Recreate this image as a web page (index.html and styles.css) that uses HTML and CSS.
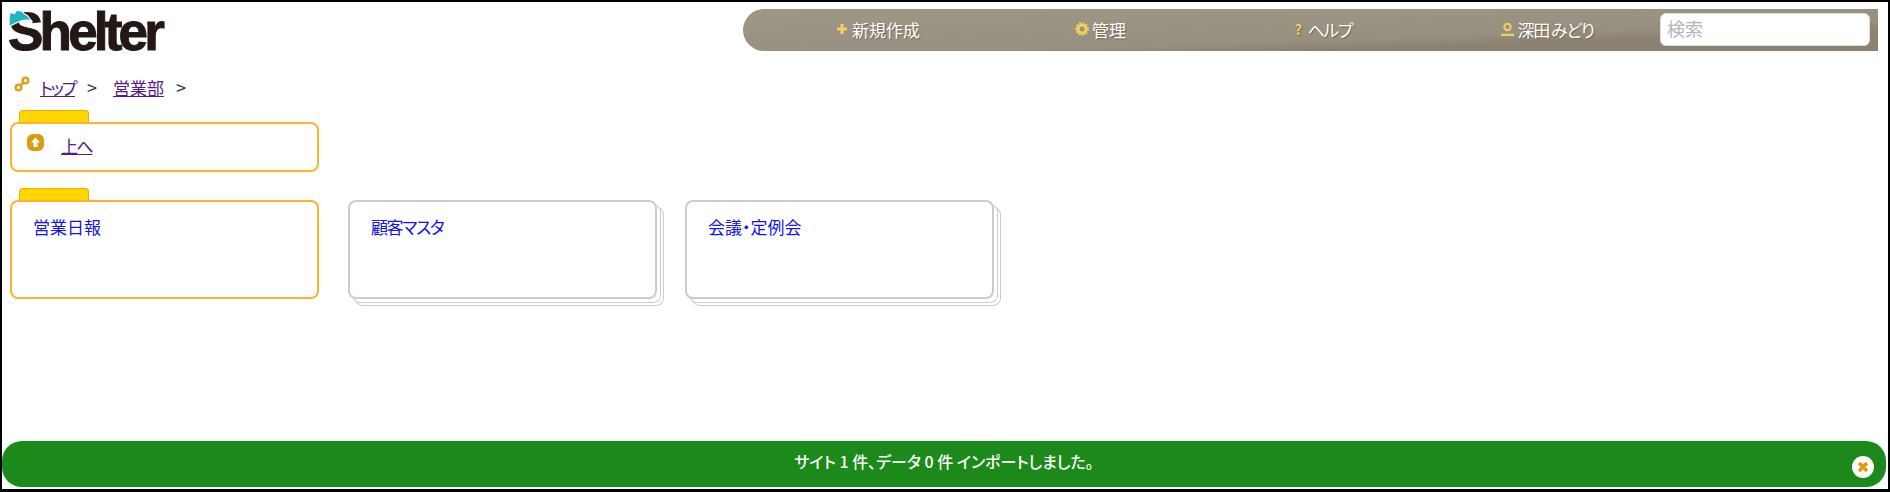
FILE: index.html
```html
<!DOCTYPE html>
<html lang="ja">
  <head>
    <meta charset="UTF-8" />
    <title>Shelter</title>
    <link rel="stylesheet" href="styles.css">
  </head>
  <body>
    <div class="frame">
      <header class="top">
        <a class="logo">
          <span>Shelter</span>
          <svg class="helmet" width="26" height="20" viewBox="0 0 24 18">
            <path d="M1 16 L1 8 L2 3 L6 4 L8 1 L12 1.5 L15 4 L18 6 L22 11 C17 9 13 10 9 12 C6 13.5 3 15 1 16 Z" fill="#1fb3c4" stroke="#fff" stroke-width="1" />
          </svg>
        </a>
        <nav class="menu">
          <a class="menu-item">
            <svg width="14" height="14" viewBox="0 0 14 14"><path d="M7 2v10M2 7h10" stroke="#f2d060" stroke-width="3" /></svg>
            新規作成
          </a>
          <a class="menu-item">
            <svg width="14" height="14" viewBox="0 0 14 14"><circle cx="7" cy="7" r="4" fill="none" stroke="#f2d060" stroke-width="3" /><circle cx="7" cy="7" r="6" fill="none" stroke="#f2d060" stroke-width="1.5" stroke-dasharray="2 1.5" /></svg>
            管理
          </a>
          <a class="menu-item tight">
            <span class="help-mark">?</span>
            ヘルプ
          </a>
          <a class="menu-item tight">
            <svg width="15" height="14" viewBox="0 0 15 14"><circle cx="7.5" cy="5" r="3.2" fill="none" stroke="#f2d060" stroke-width="2" /><path d="M1 13h13" stroke="#f2d060" stroke-width="2.5" /></svg>
            深田 みどり
          </a>
          <input class="search" type="text" placeholder="検索" />
        </nav>
      </header>

      <div class="crumbs">
        <svg class="crumb-icon" width="16" height="16" viewBox="0 0 16 16">
          <g fill="none" stroke="#d9a520" stroke-width="2.5">
            <circle cx="11.5" cy="4.5" r="2.8" />
            <circle cx="4.5" cy="11.5" r="2.8" />
            <path d="M6 10 L10 6" />
          </g>
        </svg>
        <a href="#" class="tight">トップ</a>
        <span class="sep">&gt;</span>
        <a href="#">営業部</a>
        <span class="sep">&gt;</span>
      </div>

      <div class="row up-row">
        <div class="card folder up-card">
          <svg width="17" height="17" viewBox="0 0 17 17"><rect width="17" height="17" rx="6" fill="#d89e10" /><path d="M8.5 3.5 L13 8.5 H10.5 V13 H6.5 V8.5 H4 Z" fill="#fff" /></svg>
          <a href="#">上へ</a>
        </div>
      </div>

      <div class="row">
        <div class="card folder big"><a class="title">営業日報</a></div>
        <div class="stack"><div class="card plain big"><a class="title tight">顧客マスタ</a></div></div>
        <div class="stack"><div class="card plain big"><a class="title">会議・定例会</a></div></div>
      </div>

      <div class="notice">
        <span>サイト 1 件、データ 0 件 インポートしました。</span>
        <span class="notice-close">
          <svg width="12" height="12" viewBox="0 0 12 12"><path d="M2 2 L10 10 M10 2 L2 10" stroke="#e09a10" stroke-width="3.5" /></svg>
        </span>
      </div>
    </div>
  </body>
</html>
```

FILE: styles.css
```css
html,
body {
  margin: 0;
  height: 492px;
  overflow: hidden;
}

body {
  font-family: "Noto Sans CJK JP", "Noto Sans", sans-serif;
  font-size: 17px;
  font-feature-settings: "palt";
  color: #333;
  background-color: #fff;
}

/* kana runs come out wider than in the original font */
.tight {
  letter-spacing: -1.4px;
}

.frame {
  box-sizing: border-box;
  width: 1890px;
  height: 492px;
  border: 2px solid #000;
  border-bottom-width: 3px;
  padding: 0 10px 0 6px;
  position: relative;
}

/* header */

.top {
  display: flex;
  justify-content: space-between;
  padding-top: 7px;
  height: 49px;
}

.logo {
  position: relative;
  font-family: "Liberation Sans", sans-serif;
  font-weight: bold;
  font-size: 53px;
  line-height: 46px;
  letter-spacing: -3.8px;
  color: #231815;
  -webkit-text-stroke: 1px #231815;
}

.helmet {
  position: absolute;
  left: 0;
  top: 0;
}

.menu {
  width: 1135px;
  height: 42px;
  box-sizing: border-box;
  padding-left: 23px;
  padding-bottom: 2px;
  display: grid;
  grid-template-columns: repeat(4, 223px) 1fr;
  align-items: center;
  border-radius: 21px 0 0 21px;
  background: linear-gradient(178deg, #9f9786 0%, #979080 62%, #8a8170 76%, #8a8170 100%);
}

.menu-item {
  display: flex;
  justify-content: center;
  align-items: center;
  gap: 3px;
  color: #fff;
  font-size: 17px;
  text-shadow: 1px 1px 1px #6d6554;
}

.help-mark {
  color: #f2d060;
  font-weight: bold;
  font-size: 14px;
  margin-right: 4px;
}

.search {
  box-sizing: border-box;
  justify-self: end;
  width: 210px;
  height: 33px;
  margin-right: 8px;
  border: 1px solid #ddd;
  border-radius: 6px;
  padding: 0 6px 2px;
  font-family: inherit;
  font-size: 18px;
}

.search::placeholder {
  color: #b5b5b5;
}

/* breadcrumb */

.crumbs {
  display: flex;
  align-items: center;
  height: 34px;
  margin-top: 12px;
  gap: 12px;
  padding-left: 6px;
}

.crumbs a {
  color: #551a8b;
}

.crumbs a.tight {
  letter-spacing: -2.4px;
  margin-left: -2px;
}

.crumbs .sep {
  margin-right: 4px;
  font-size: 18px;
}

.crumb-icon {
  margin-bottom: 6px;
}

/* cards */

.row {
  display: flex;
  gap: 29px;
  margin-bottom: 28px;
}

.up-row {
  margin-top: 18px;
  padding-left: 2px;
}

.row + .row {
  padding-left: 2px;
}

.card {
  box-sizing: border-box;
  width: 309px;
  background-color: #fff;
  border-radius: 8px;
  position: relative;
}

.folder {
  border: 2px solid #ffb22e;
}

/* yellow tab on top of the folder card */
.folder::before {
  content: "";
  position: absolute;
  left: 7px;
  top: -14px;
  width: 70px;
  height: 12px;
  box-sizing: border-box;
  background-color: #ffd700;
  border: 1px solid #ffa500;
  border-bottom: none;
  border-radius: 4px 4px 0 0;
}

.up-card {
  height: 50px;
  display: flex;
  align-items: flex-start;
  gap: 17px;
  padding: 10px 15px;
}

.up-card a {
  color: #551a8b;
  margin-top: 2px;
  line-height: 20px;
  letter-spacing: -1.5px;
}

.big {
  height: 99px;
  padding: 12px 21px;
}

.title {
  color: #1414ee;
  line-height: 24px;
}

.plain {
  border: 2px solid #ccc;
}

.stack {
  width: 316px;
  height: 106px;
  margin-right: -8px;
}

.stack .card {
  box-shadow: 4px 4px 0 -1px #fff, 4px 4px 0 0 #ccc, 7px 7px 0 -1px #fff, 7px 7px 0 0 #ccc;
}

/* import result message, stuck to the bottom of the page */

.notice {
  position: absolute;
  left: 0;
  right: 2px;
  bottom: 2px;
  height: 46px;
  display: flex;
  justify-content: center;
  align-items: center;
  background-color: #1b8a1b;
  border-radius: 20px;
  color: #fff;
  font-size: 16px;
  font-weight: 500;
  padding-bottom: 6px;
  box-sizing: border-box;
}

.notice-close {
  position: absolute;
  right: 12px;
  bottom: 9px;
  width: 22px;
  height: 22px;
  border-radius: 50%;
  background-color: #fff;
  display: flex;
  justify-content: center;
  align-items: center;
}
```
